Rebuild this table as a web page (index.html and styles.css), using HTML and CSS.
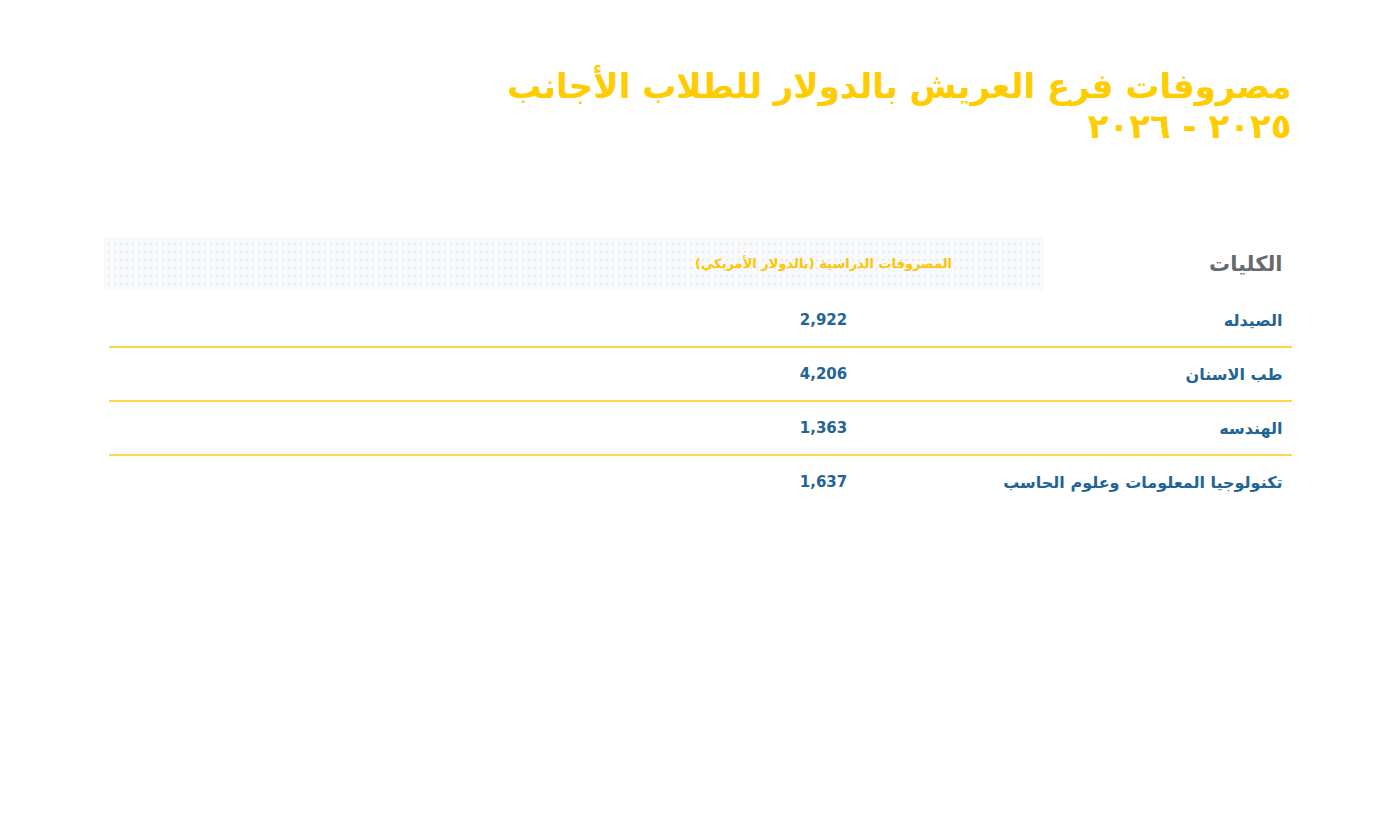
FILE: index.html
```html
<!DOCTYPE html>
<html lang="ar" dir="rtl">
<head>
<meta charset="utf-8">
<title>مصروفات فرع العريش</title>
<link rel="stylesheet" href="styles.css">
</head>
<body>
<main class="page">
  <h1 class="title">مصروفات فرع العريش بالدولار للطلاب الأجانب<br>٢٠٢٥ - ٢٠٢٦</h1>
  <section class="fees">
    <div class="thead">
      <div class="th th-college">الكليات</div>
      <div class="th th-fees">
        <span class="th-fees-label">المصروفات الدراسية (بالدولار الأمريكي)</span>
      </div>
    </div>
    <div class="row">
      <div class="cell college">الصيدله</div>
      <div class="cell amount">2,922</div>
      <div class="cell"></div>
    </div>
    <div class="row">
      <div class="cell college">طب الاسنان</div>
      <div class="cell amount">4,206</div>
      <div class="cell"></div>
    </div>
    <div class="row">
      <div class="cell college">الهندسه</div>
      <div class="cell amount">1,363</div>
      <div class="cell"></div>
    </div>
    <div class="row row-last">
      <div class="cell college">تكنولوجيا المعلومات وعلوم الحاسب</div>
      <div class="cell amount">1,637</div>
      <div class="cell"></div>
    </div>
  </section>
</main>
</body>
</html>
```

FILE: styles.css
```css
html, body {
  margin: 0;
  padding: 0;
  background: #ffffff;
}

body {
  font-family: "DejaVu Sans", "Noto Sans", sans-serif;
}

.page {
  width: 1183px;
  margin: 0 auto;
  direction: rtl;
}

.title {
  margin: 66px 0 0 0;
  font-size: 34px;
  line-height: 40px;
  font-weight: 700;
  color: #ffcc00;
  text-align: right;
}

.fees {
  margin-top: 91px;
}

.thead {
  display: grid;
  grid-template-columns: 248px 1fr;
  height: 53px;
  margin-left: -5px;
}

.th {
  display: flex;
  align-items: center;
}

.th-college {
  padding-right: 9px;
  font-size: 21px;
  font-weight: 700;
  color: #666a6e;
}

.th-fees {
  background-color: #f8f9fb;
  background-image: radial-gradient(circle, #e3e5e9 0.6px, transparent 1px);
  background-size: 6px 8px;
  background-position: 2px 3px;
  border-radius: 3px;
}

.th-fees-label {
  width: 440px;
  text-align: center;
  font-size: 13px;
  font-weight: 700;
  color: #ffc400;
}

.row {
  display: grid;
  grid-template-columns: 248px 440px 1fr;
  height: 52px;
  align-items: center;
  border-bottom: 2px solid #ffd54a;
}

.thead + .row {
  margin-top: 4px;
}

.row-last {
  border-bottom: none;
}

.cell {
  font-size: 16px;
  font-weight: 700;
  color: #236496;
  white-space: nowrap;
}

.college {
  padding-right: 9px;
}

.amount {
  text-align: center;
  direction: ltr;
  font-family: "DejaVu Sans", "Open Sans", sans-serif;
  font-size: 15px;
}
```
